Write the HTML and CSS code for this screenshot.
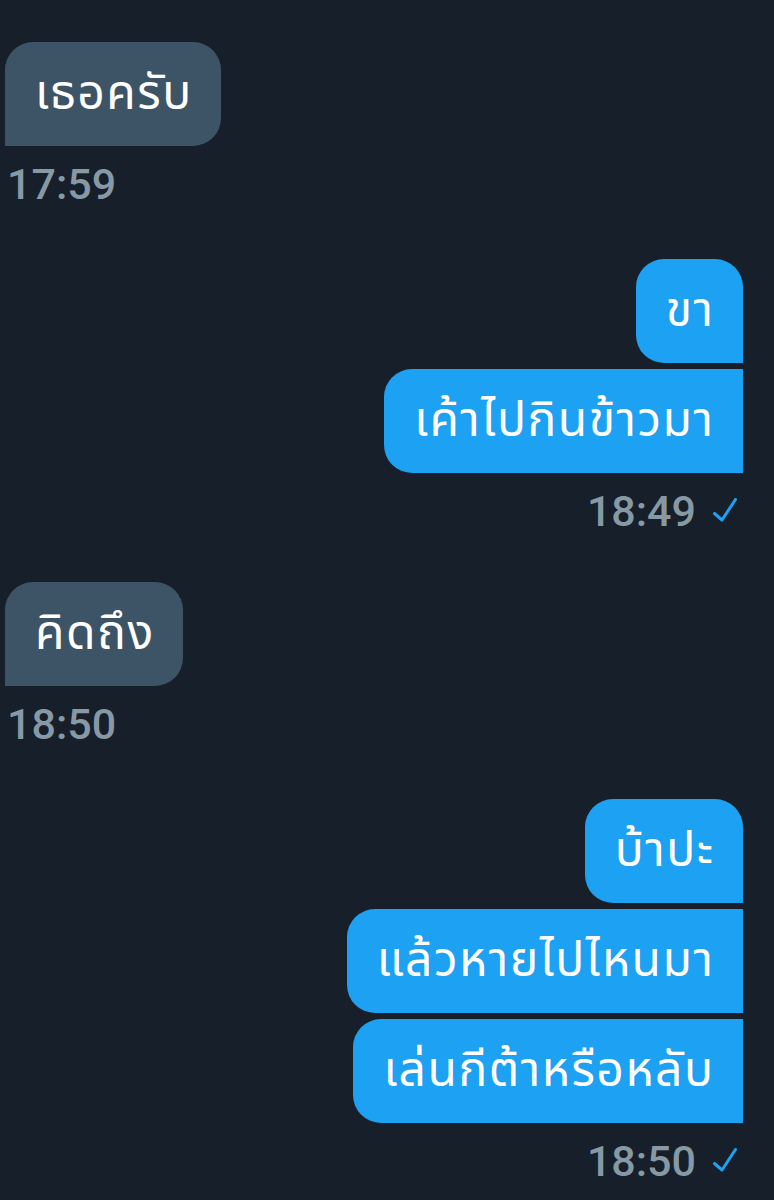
FILE: index.html
```html
<!DOCTYPE html>
<html lang="th">
<head>
<meta charset="utf-8">
<title>Chat</title>
<link rel="stylesheet" href="styles.css">
</head>
<body>
<main class="chat">
  <section class="group in">
    <div class="bubble">เธอครับ</div>
    <div class="time">17:59</div>
  </section>
  <section class="group out">
    <div class="bubble">ขา</div>
    <div class="bubble">เค้าไปกินข้าวมา</div>
    <div class="time">18:49 <svg class="check" viewBox="0 0 24 24" width="24" height="24"><path d="M1.5 15.5 L9 22 L22.5 1.5" fill="none" stroke="#1da1f2" stroke-width="3" stroke-linecap="round" stroke-linejoin="round"/></svg></div>
  </section>
  <section class="group in">
    <div class="bubble">คิดถึง</div>
    <div class="time">18:50</div>
  </section>
  <section class="group out">
    <div class="bubble">บ้าปะ</div>
    <div class="bubble">แล้วหายไปไหนมา</div>
    <div class="bubble">เล่นกีต้าหรือหลับ</div>
    <div class="time">18:50 <svg class="check" viewBox="0 0 24 24" width="24" height="24"><path d="M1.5 15.5 L9 22 L22.5 1.5" fill="none" stroke="#1da1f2" stroke-width="3" stroke-linecap="round" stroke-linejoin="round"/></svg></div>
  </section>
</main>
</body>
</html>
```

FILE: styles.css
```css
html, body {
  margin: 0;
  background: #17202a;
}
.chat {
  display: flex;
  flex-direction: column;
  gap: 49px;
  padding: 42px 31px 0 5px;
}
.group {
  display: flex;
  flex-direction: column;
  gap: 6px;
}
.group.in { align-items: flex-start; }
.group.out { align-items: flex-end; }
.bubble {
  font-family: "Noto Sans Thai", "Noto Sans", sans-serif;
  font-size: 48px;
  line-height: 52px;
  letter-spacing: 1.5px;
  padding: 27px 28.5px 25px 30px;
  color: #ffffff;
}
.in .bubble {
  background: #3d5466;
  border-radius: 28px 28px 28px 0;
}
.out .bubble {
  background: #1da1f2;
  border-radius: 28px 0 0 28px;
}
.out .bubble:first-child {
  border-radius: 28px 28px 0 28px;
}
.time {
  font-family: Roboto, "Liberation Sans", sans-serif;
  font-weight: 500;
  font-size: 43px;
  line-height: 52px;
  color: #8899a6;
  margin-top: 6px;
  display: flex;
  align-items: center;
  gap: 17px;
}
.in .time { padding-left: 2px; }
.out .time {
  padding-right: 6px;
  margin-bottom: -4px;
}
.check { display: block; margin-top: -2px; }
```
